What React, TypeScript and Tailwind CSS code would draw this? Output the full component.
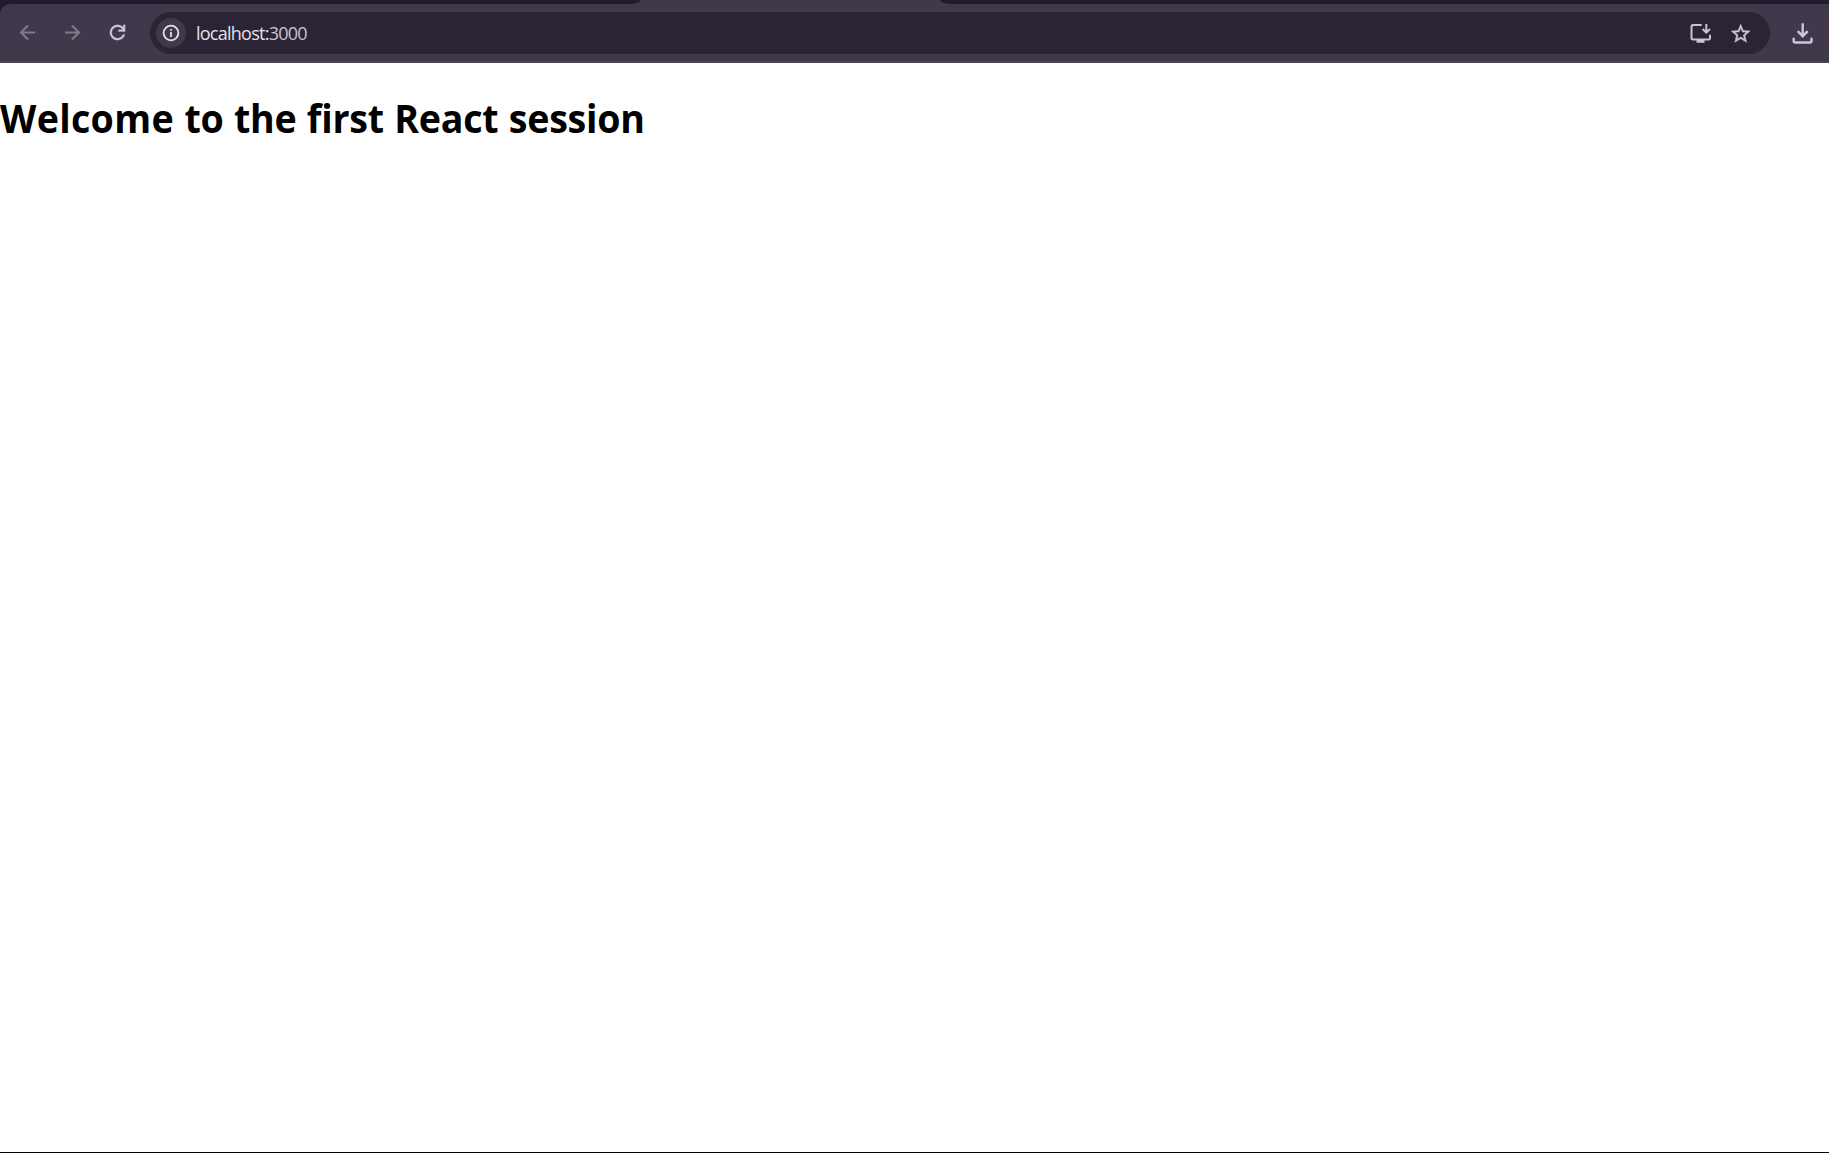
function Toolbar() {
  return (
    <div className="h-[59px] w-full shrink-0 flex items-center rounded-tl-[10px] bg-[#41384b] border-b-2 border-[#4b474f]">
      <div className="w-[150px] shrink-0 flex items-center gap-[22px] pl-4">
        <svg className="size-[23px]" viewBox="0 0 23 23" fill="none" stroke="#827a8b" strokeWidth="2">
          <path d="M19 11.5H5.5M12 4.5L5 11.5L12 18.5" />
        </svg>
        <svg className="size-[23px]" viewBox="0 0 23 23" fill="none" stroke="#827a8b" strokeWidth="2">
          <path d="M4 11.5H17.5M11 4.5L18 11.5L11 18.5" />
        </svg>
        <svg className="size-[23px]" viewBox="0 0 24 24" fill="#cfc3df" stroke="#cfc3df" strokeWidth="0.3">
          <path d="M12 20q-3.35 0-5.675-2.325T4 12t2.325-5.675T12 4q1.725 0 3.3.713T18 6.75V4h2v7h-7V9h4.2q-.8-1.4-2.187-2.2T12 6Q9.5 6 7.750 7.750T6 12t1.750 4.250T12 18q1.925 0 3.475-1.100T17.650 14h2.100q-.7 2.650-2.850 4.325T12 20" />
        </svg>
      </div>
      <div className="h-[42px] w-[1620px] shrink-0 mt-px flex items-center rounded-full bg-[#2b2434] pl-1.5 pr-[18px]">
        <div className="size-[30px] shrink-0 flex items-center justify-center rounded-full bg-[#41384b]">
          <svg className="size-[18px]" viewBox="0 0 18 18" fill="none" stroke="#e6e0e9" strokeWidth="1.8">
            <circle cx="9" cy="9" r="7.4" />
            <path d="M9 8V13M9 5V6.8" />
          </svg>
        </div>
        <div className="ml-[10px] whitespace-nowrap font-['Open_Sans',sans-serif] text-[18px] leading-[24px] tracking-[-0.75px] text-[#e6e0e9]">
          localhost:<span className="text-[#c9c3cf]">3000</span>
        </div>
        <div className="ml-auto flex items-center gap-[18px]">
          <svg className="size-[22px]" viewBox="0 0 22 22" fill="none" stroke="#cbc4cd" strokeWidth="2">
            <path d="M11.7 3H3Q1.500 3 1.500 4.500V16Q1.500 17.500 3 17.500H18.500Q20 17.500 20 16V12.700" />
            <path d="M6.500 19H14.500" strokeWidth="3.500" />
            <path d="M16.300 2V10.500M12.600 7L16.300 10.700L20 7" />
          </svg>
          <svg className="size-[22px]" viewBox="0.73 -0.32 23.2 23.2" fill="#cbc4cd" stroke="#cbc4cd" strokeWidth="0.5">
            <path d="M22 9.240l-7.190-.62L12 2 9.190 8.630 2 9.240l5.460 4.730L5.820 21 12 17.270 18.180 21l-1.630-7.030L22 9.240zM12 15.400l-3.760 2.270 1-4.280-3.320-2.880 4.380-.38L12 6.100l1.710 4.040 4.380.38-3.320 2.880 1 4.280L12 15.400z" />
          </svg>
        </div>
      </div>
      <svg className="ml-[21px] mt-px size-6 shrink-0" viewBox="0 0 24 24" fill="none" stroke="#cfc3df" strokeWidth="2.4">
        <path d="M11.700 2.300V15M6.700 10.200L11.700 15.200L16.700 10.200M2.700 16.800V20Q2.700 21.500 4.200 21.500H19Q20.500 21.500 20.500 20V16.800" />
      </svg>
    </div>
  );
}

export default function App() {
  return (
    <div className="h-[1153px] w-[1829px] overflow-hidden flex flex-col bg-white border-b border-black">
      <div className="shrink-0 bg-[#221b2d]">
        <div className="flex h-1 bg-[#41384b]">
          <div className="w-[641px] rounded-br-[12px_4px] bg-[#221b2d]" />
          <div className="w-[299px]" />
          <div className="flex-1 rounded-bl-[12px_4px] bg-[#221b2d]" />
        </div>
        <Toolbar />
      </div>
      <h1 className="mt-7 origin-left scale-x-[0.939] whitespace-nowrap font-['Open_Sans',sans-serif] text-[40px] leading-[54px] font-bold tracking-[-0.25px] [word-spacing:1px] text-black">
        <span className="tracking-[0.35px]">Welcome</span> to the first React session
      </h1>
    </div>
  );
}
